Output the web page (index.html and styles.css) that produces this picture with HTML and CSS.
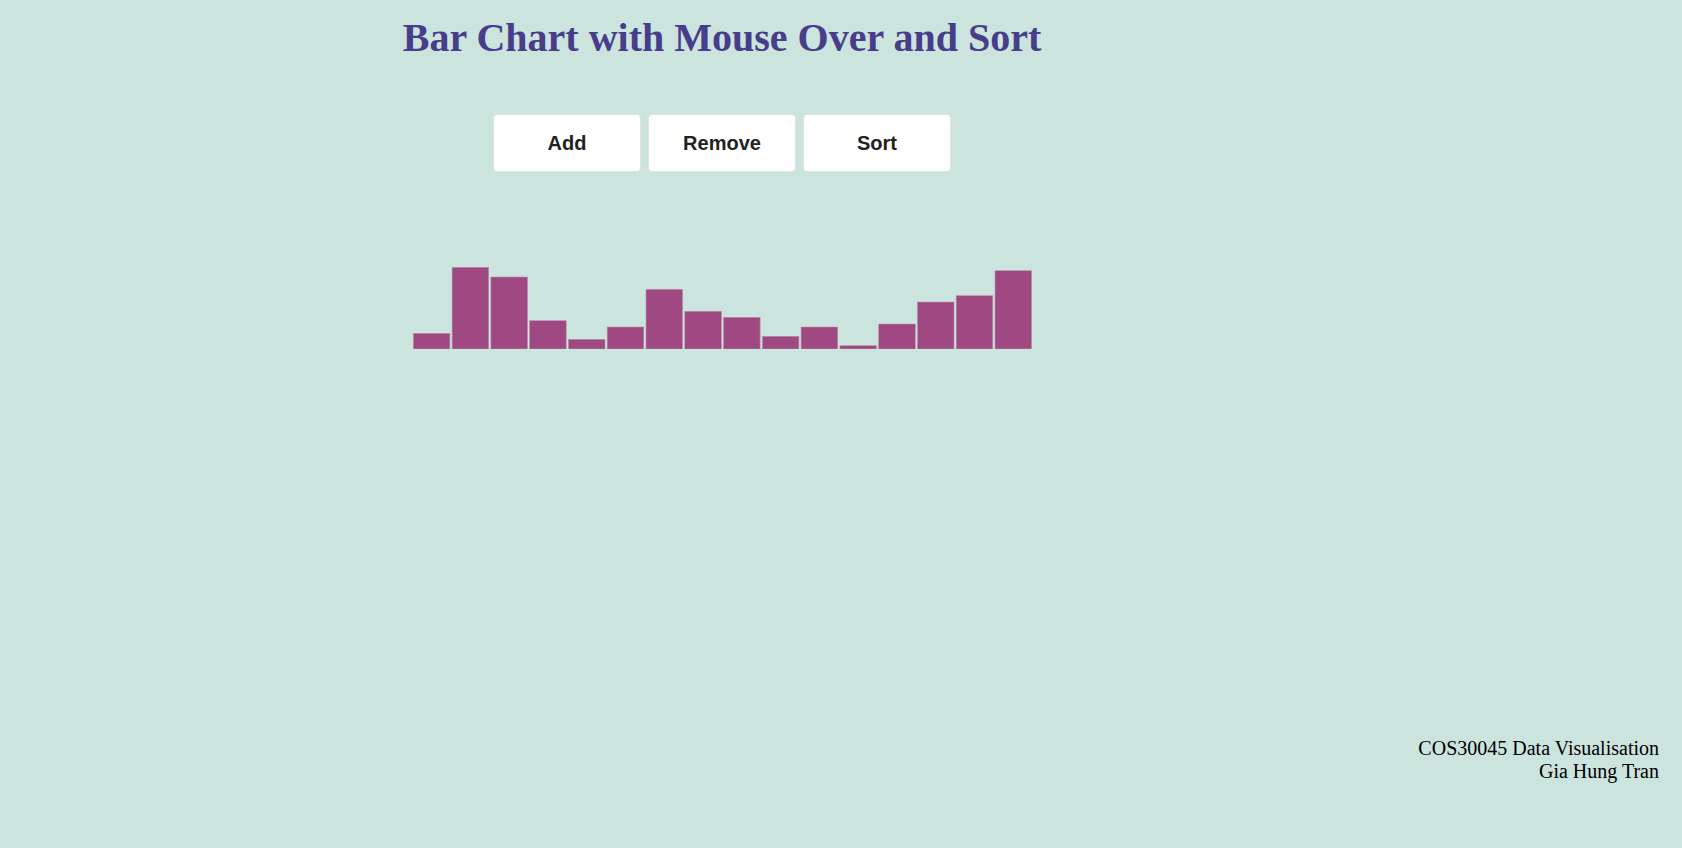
FILE: index.html
```html
<!DOCTYPE html>
<html lang="en">
<head>
<meta charset="utf-8">
<title>Bar Chart with Mouse Over and Sort</title>
<link rel="stylesheet" href="styles.css">
</head>
<body>
<div class="page">
  <main class="main">
    <h1 class="title">Bar Chart with Mouse Over and Sort</h1>
    <div class="controls">
      <button class="btn">Add</button>
      <button class="btn">Remove</button>
      <button class="btn">Sort</button>
    </div>
    <div class="chart">
      <svg class="chart-svg" width="620" height="100" viewBox="0 0 620 100">
        <rect class="bar" x="1.3" y="84.3" width="36.6" height="15.7"/>
        <rect class="bar" x="40.1" y="18.3" width="36.6" height="81.7"/>
        <rect class="bar" x="78.9" y="28" width="36.6" height="72"/>
        <rect class="bar" x="117.6" y="71.7" width="36.6" height="28.3"/>
        <rect class="bar" x="156.4" y="90.3" width="36.6" height="9.7"/>
        <rect class="bar" x="195.2" y="78" width="36.6" height="22"/>
        <rect class="bar" x="234" y="40.3" width="36.6" height="59.7"/>
        <rect class="bar" x="272.8" y="62.3" width="36.6" height="37.7"/>
        <rect class="bar" x="311.5" y="68.3" width="36.6" height="31.7"/>
        <rect class="bar" x="350.3" y="87.3" width="36.6" height="12.7"/>
        <rect class="bar" x="389.1" y="78" width="36.6" height="22"/>
        <rect class="bar" x="427.9" y="96.7" width="36.6" height="3.3"/>
        <rect class="bar" x="466.7" y="75" width="36.6" height="25"/>
        <rect class="bar" x="505.4" y="53" width="36.6" height="47"/>
        <rect class="bar" x="544.2" y="46.7" width="36.6" height="53.3"/>
        <rect class="bar" x="583" y="21.7" width="36.6" height="78.3"/>
      </svg>
    </div>
  </main>
  <footer class="footer">
    <p class="footer-line">COS30045 Data Visualisation</p>
    <p class="footer-line">Gia Hung Tran</p>
  </footer>
</div>
</body>
</html>
```

FILE: styles.css
```css
html, body {
  margin: 0;
  padding: 0;
}

body {
  background: #cbe4de;
  font-family: "Liberation Serif", "Times New Roman", serif;
  color: #000;
}

.page {
  min-height: 100vh;
  display: flex;
  flex-direction: column;
  box-sizing: border-box;
  padding-bottom: 65px;
}

.main {
  width: 640px;
  margin-left: 402px;
  padding-top: 15px;
  display: flex;
  flex-direction: column;
  align-items: center;
}

.title {
  margin: 0;
  font-size: 40px;
  font-weight: bold;
  color: #483d8b;
  line-height: 46px;
  white-space: nowrap;
}

.controls {
  display: flex;
  gap: 7px;
  margin-top: 53px;
}

.btn {
  width: 148px;
  height: 58px;
  background: #fff;
  border: 1px solid #e2e2e2;
  border-radius: 4px;
  font-family: "Liberation Sans", Arial, sans-serif;
  font-weight: bold;
  font-size: 20px;
  color: #222;
  padding: 0;
  cursor: pointer;
}

.chart {
  margin-top: 77px;
  display: flex;
  justify-content: center;
}

.chart-svg {
  display: block;
}

.bar {
  fill: #a04882;
  stroke: #b892ab;
  stroke-width: 0.6;
}

.footer {
  margin-top: auto;
  padding-right: 23px;
  text-align: right;
  font-size: 20px;
}

.footer-line {
  margin: 0;
  line-height: 23px;
}
```
